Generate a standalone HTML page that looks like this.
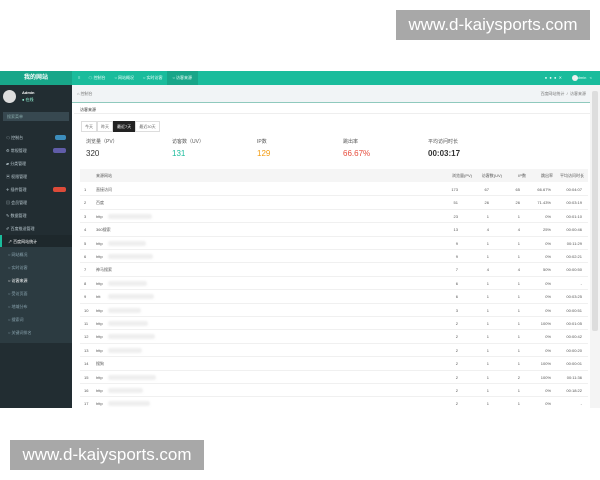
<!DOCTYPE html>
<html><head><meta charset="utf-8"><style>
*{margin:0;padding:0;box-sizing:border-box}
body{width:600px;height:480px;background:#fff;position:relative;overflow:hidden;font-family:"Liberation Sans","Noto Sans CJK SC",sans-serif;font-size:4px;color:#555}
.abs{position:absolute}
.wm{position:absolute;background:#a8a8a8;color:#fff;font-size:17px;line-height:30px;text-align:center;width:194px;height:30px}
#app{position:absolute;left:0;top:71px;width:600px;height:337px;background:#fff;overflow:hidden}
.side{position:absolute;left:0;top:0;width:72px;height:337px;background:#222d32}
.logo{height:14px;background:#18a689;color:#fff;font-size:6px;line-height:14px;text-align:center;font-weight:bold}
.top{position:absolute;left:72px;top:0;right:0;height:14px;background:#1abc9c;color:#e8fff8;font-size:4px;line-height:14px}
.mi{position:absolute;left:0;width:72px;height:13px;line-height:13px;padding-left:6px;color:#b8c7ce;font-size:4px}
.badge{position:absolute;right:6px;top:4px;width:11px;height:5px;border-radius:2px}
.sub{position:absolute;left:0;top:176px;width:72px;height:96px;background:#2c3b41}
.row{position:absolute;left:80px;width:508px;height:13.4px;border-bottom:1px solid #f0f0f0;font-size:4px;line-height:13px;color:#555}
.row span{position:absolute}
.blur{position:absolute;top:4px;height:5px;background:#eee;border-radius:3px;filter:blur(1px)}
</style></head><body>
<div class="wm" style="left:396px;top:10px">www.d-kaiysports.com</div>
<div class="wm" style="left:10px;top:440px">www.d-kaiysports.com</div>
<div id="app">
 <div class="side">
  <div class="logo">我的网站</div>
  <div class="abs" style="left:3px;top:19px;width:13px;height:13px;border-radius:50%;background:#ddd"></div>
  <div class="abs" style="left:22px;top:19px;color:#fff;font-size:4px;font-weight:bold">Admin</div>
  <div class="abs" style="left:22px;top:26px;color:#9fd;font-size:4px">● 在线</div>
  <div class="abs" style="left:3px;top:41px;width:66px;height:9px;background:#374850;color:#8aa;font-size:4px;line-height:9px;padding-left:4px">搜索菜单</div>
  <div class="mi" style="top:60px">☁ 控制台<span class="badge" style="background:#3c8dbc"></span></div>
  <div class="mi" style="top:73px">⚙ 常规管理<span class="badge" style="background:#605ca8;width:13px"></span></div>
  <div class="mi" style="top:86px">▰ 分类管理</div>
  <div class="mi" style="top:99px">▣ 权限管理</div>
  <div class="mi" style="top:112px">✈ 插件管理<span class="badge" style="background:#dd4b39;width:13px"></span></div>
  <div class="mi" style="top:125px">▤ 会员管理</div>
  <div class="mi" style="top:138px">✎ 数据管理</div>
  <div class="mi" style="top:151px">✐ 百度推送管理</div>
  <div class="mi" style="top:164px;background:#1e282c;color:#fff;border-left:2px solid #1abc9c">↗ 百度网站统计</div>
  <div class="sub"></div>
  <div class="mi" style="top:177px;padding-left:8px;color:#8aa4af">○ 网站概况</div>
  <div class="mi" style="top:190px;padding-left:8px;color:#8aa4af">○ 实时访客</div>
  <div class="mi" style="top:203px;padding-left:8px;color:#fff">○ 访客来源</div>
  <div class="mi" style="top:216px;padding-left:8px;color:#8aa4af">○ 受访页面</div>
  <div class="mi" style="top:229px;padding-left:8px;color:#8aa4af">○ 地域分布</div>
  <div class="mi" style="top:242px;padding-left:8px;color:#8aa4af">○ 搜索词</div>
  <div class="mi" style="top:255px;padding-left:8px;color:#8aa4af">○ 关键词排名</div>
 </div>
 <div class="top">
  <span style="margin-left:6px">≡</span><span style="margin-left:8px">☁ 控制台</span><span style="margin-left:9px">○ 网站概况</span><span style="margin-left:9px">○ 实时访客</span><span style="margin-left:4px;background:#18a689;padding:0 6px;display:inline-block">○ 访客来源</span>
  <span class="abs" style="right:38px;top:0">● &nbsp;● &nbsp;● &nbsp;✕</span>
  <span class="abs" style="right:22px;top:4px;width:6px;height:6px;border-radius:50%;background:#eee"></span>
  <span class="abs" style="right:8px;top:0">Admin &nbsp;&nbsp;&lt;</span>
 </div>
 <div class="abs" style="left:72px;top:14px;width:518px;height:17px;background:#f1f4f6;font-size:4px;line-height:17px;padding-left:5px;color:#777">⌂ 控制台<span style="position:absolute;right:4px">百度网站统计 &nbsp;/ &nbsp;访客来源</span></div>
 <div class="abs" style="left:72px;top:31px;width:518px;height:1px;background:#8fc9bd"></div>
 <div class="abs" style="left:590px;top:14px;width:10px;height:323px;background:#f4f4f4"></div>
 <div class="abs" style="left:592px;top:20px;width:6px;height:240px;background:#ddd;border-radius:2px"></div>
 <div class="abs" style="left:80px;top:36px;font-size:4px;color:#333">访客来源</div>
 <div class="abs" style="left:74px;top:42px;width:516px;height:1px;background:#eee"></div>
 <div class="abs" style="left:81px;top:50px;font-size:4px;line-height:9px;color:#666">
  <span style="display:inline-block;border:1px solid #ddd;padding:0 3px">今天</span><span style="display:inline-block;border:1px solid #ddd;padding:0 3px">昨天</span><span style="display:inline-block;background:#222;color:#fff;padding:0 3px;border:1px solid #222">最近7天</span><span style="display:inline-block;border:1px solid #ddd;padding:0 3px">最近30天</span>
 </div>
 <div class="abs" style="left:86px;top:67px;font-size:5px;color:#555">浏览量（PV）</div>
 <div class="abs" style="left:86px;top:78px;font-size:8px;color:#333">320</div>
 <div class="abs" style="left:172px;top:67px;font-size:5px;color:#555">访客数（UV）</div>
 <div class="abs" style="left:172px;top:78px;font-size:8px;color:#1abc9c">131</div>
 <div class="abs" style="left:257px;top:67px;font-size:5px;color:#555">IP数</div>
 <div class="abs" style="left:257px;top:78px;font-size:8px;color:#f39c12">129</div>
 <div class="abs" style="left:343px;top:67px;font-size:5px;color:#555">跳出率</div>
 <div class="abs" style="left:343px;top:78px;font-size:8px;color:#e74c3c">66.67%</div>
 <div class="abs" style="left:428px;top:67px;font-size:5px;color:#555">平均访问时长</div>
 <div class="abs" style="left:428px;top:78px;font-size:8px;color:#333;font-weight:bold">00:03:17</div>
 <div class="row" style="top:98px;background:#f5f5f5;height:13px;border:none"><span style="left:16px">来源网站</span><span style="right:116px">浏览量(PV)</span><span style="right:86px">访客数(UV)</span><span style="right:62px">IP数</span><span style="right:35px">跳出率</span><span style="right:4px">平均访问时长</span></div>
 <div id="rows"></div>
</div>
<script>
var d=[["直接访问","173","67","65","66.67%","00:04:07"],["百度","51","26","26","71.43%","00:03:19"],["http","23","1","1","0%","00:01:10"],["360搜索","13","4","4","25%","00:00:46"],["http","9","1","1","0%","00:11:29"],["http","9","1","1","0%","00:02:21"],["神马搜索","7","4","4","50%","00:00:50"],["http","6","1","1","0%","-"],["htt","6","1","1","0%","00:03:25"],["http","3","1","1","0%","00:00:51"],["http","2","1","1","100%","00:01:05"],["http","2","1","1","0%","00:00:42"],["http","2","1","1","0%","00:00:20"],["搜狗","2","1","1","100%","00:00:01"],["http","2","1","2","100%","00:11:36"],["http","2","1","1","0%","00:18:22"],["http","2","1","1","0%","-"]];
var h="";d.forEach(function(r,i){var t=112+i*13.4;var b=r[0].indexOf("http")==0||r[0]=="htt"?'<div class="blur" style="left:28px;width:'+(30+(i*7)%20)+'px"></div>':'';
h+='<div class="row" style="top:'+t+'px"><span style="left:4px">'+(i+1)+'</span><span style="left:16px">'+r[0]+'</span>'+b+'<span style="right:130px">'+r[1]+'</span><span style="right:99px">'+r[2]+'</span><span style="right:68px">'+r[3]+'</span><span style="right:37px">'+r[4]+'</span><span style="right:6px">'+r[5]+'</span></div>';});
document.getElementById("rows").outerHTML=h;
</script>
</body></html>
